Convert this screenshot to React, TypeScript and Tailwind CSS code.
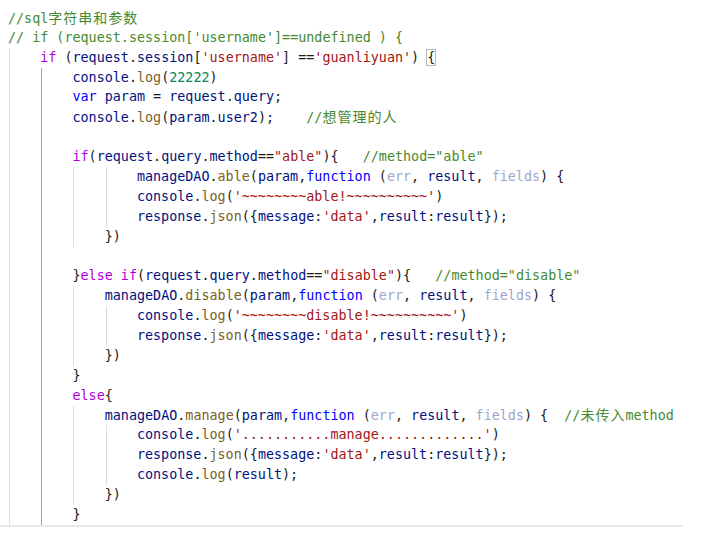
import React from "react";

type Tok = [string, string];

const K = "text-[#af00db]";
const B = "text-[#0000ff]";
const V = "text-[#001080]";
const F = "text-[#795e26]";
const S = "text-[#a31515]";
const C = "text-[#44892f]";
const N = "text-[#098658]";
const U = "text-[#a0a6cc]";
const P = "text-[#1a1a1a]";
const CJ = "cjk";
const BOX = "box";

type Line = { indent: number; guides: number[]; toks: Tok[] };

const G01 = [0, 1];
const G012 = [0, 1, 2];
const G0123 = [0, 1, 2, 3];

const lines: Line[] = [
  { indent: 0, guides: [], toks: [[C, "//sql"], [CJ, "字符串和参数"]] },
  { indent: 0, guides: [], toks: [[C, "// if (request.session['username']==undefined ) {"]] },
  {
    indent: 1,
    guides: [0],
    toks: [
      [K, "if"], [P, " ("], [V, "request"], [P, "."], [V, "session"], [P, "["],
      [S, "'username'"], [P, "] =="], [S, "'guanliyuan'"], [P, ") "], [BOX, "{"],
    ],
  },
  { indent: 2, guides: G01, toks: [[V, "console"], [P, "."], [F, "log"], [P, "("], [N, "22222"], [P, ")"]] },
  {
    indent: 2,
    guides: G01,
    toks: [[B, "var"], [P, " "], [V, "param"], [P, " = "], [V, "request"], [P, "."], [V, "query"], [P, ";"]],
  },
  {
    indent: 2,
    guides: G01,
    toks: [
      [V, "console"], [P, "."], [F, "log"], [P, "("], [V, "param"], [P, "."], [V, "user2"], [P, ");    "],
      [C, "//"], [CJ, "想管理的人"],
    ],
  },
  { indent: 0, guides: G01, toks: [] },
  {
    indent: 2,
    guides: G01,
    toks: [
      [K, "if"], [P, "("], [V, "request"], [P, "."], [V, "query"], [P, "."], [V, "method"], [P, "=="],
      [S, "\"able\""], [P, "){   "], [C, "//method=\"able\""],
    ],
  },
  {
    indent: 4,
    guides: G0123,
    toks: [
      [V, "manageDAO"], [P, "."], [F, "able"], [P, "("], [V, "param"], [P, ","], [B, "function"], [P, " ("],
      [U, "err"], [P, ", "], [V, "result"], [P, ", "], [U, "fields"], [P, ") {"],
    ],
  },
  { indent: 4, guides: G0123, toks: [[V, "console"], [P, "."], [F, "log"], [P, "("], [S, "'~~~~~~~~able!~~~~~~~~~~'"], [P, ")"]] },
  {
    indent: 4,
    guides: G0123,
    toks: [
      [V, "response"], [P, "."], [F, "json"], [P, "({"], [V, "message"], [P, ":"], [S, "'data'"], [P, ","],
      [V, "result"], [P, ":"], [V, "result"], [P, "});"],
    ],
  },
  { indent: 3, guides: G012, toks: [[P, "})"]] },
  { indent: 0, guides: G01, toks: [] },
  {
    indent: 2,
    guides: G01,
    toks: [
      [P, "}"], [K, "else"], [P, " "], [K, "if"], [P, "("], [V, "request"], [P, "."], [V, "query"], [P, "."],
      [V, "method"], [P, "=="], [S, "\"disable\""], [P, "){   "], [C, "//method=\"disable\""],
    ],
  },
  {
    indent: 3,
    guides: G012,
    toks: [
      [V, "manageDAO"], [P, "."], [F, "disable"], [P, "("], [V, "param"], [P, ","], [B, "function"], [P, " ("],
      [U, "err"], [P, ", "], [V, "result"], [P, ", "], [U, "fields"], [P, ") {"],
    ],
  },
  { indent: 4, guides: G0123, toks: [[V, "console"], [P, "."], [F, "log"], [P, "("], [S, "'~~~~~~~~disable!~~~~~~~~~~'"], [P, ")"]] },
  {
    indent: 4,
    guides: G0123,
    toks: [
      [V, "response"], [P, "."], [F, "json"], [P, "({"], [V, "message"], [P, ":"], [S, "'data'"], [P, ","],
      [V, "result"], [P, ":"], [V, "result"], [P, "});"],
    ],
  },
  { indent: 3, guides: G012, toks: [[P, "})"]] },
  { indent: 2, guides: G01, toks: [[P, "}"]] },
  { indent: 2, guides: G01, toks: [[K, "else"], [P, "{"]] },
  {
    indent: 3,
    guides: G012,
    toks: [
      [V, "manageDAO"], [P, "."], [F, "manage"], [P, "("], [V, "param"], [P, ","], [B, "function"], [P, " ("],
      [U, "err"], [P, ", "], [V, "result"], [P, ", "], [U, "fields"], [P, ") {  "], [C, "//"], [CJ, "未传入"],
      [C, "method"],
    ],
  },
  { indent: 4, guides: G0123, toks: [[V, "console"], [P, "."], [F, "log"], [P, "("], [S, "'...........manage.............'"], [P, ")"]] },
  {
    indent: 4,
    guides: G0123,
    toks: [
      [V, "response"], [P, "."], [F, "json"], [P, "({"], [V, "message"], [P, ":"], [S, "'data'"], [P, ","],
      [V, "result"], [P, ":"], [V, "result"], [P, "});"],
    ],
  },
  { indent: 4, guides: G0123, toks: [[V, "console"], [P, "."], [F, "log"], [P, "("], [V, "result"], [P, ");"]] },
  { indent: 3, guides: G012, toks: [[P, "})"]] },
  { indent: 2, guides: G01, toks: [[P, "}"]] },
];

function Token({ t }: { t: Tok }) {
  const [cls, text] = t;
  if (cls === CJ) {
    return <span className="font-['Noto_Sans_CJK_SC',sans-serif] text-[14px] tracking-[1px] text-[#44892f]">{text}</span>;
  }
  if (cls === BOX) {
    return <span className="text-[#1a1a1a] outline outline-1 outline-[#b8b8b8]">{text}</span>;
  }
  return <span className={cls}>{text}</span>;
}

function CodeLine({ line }: { line: Line }) {
  const cells = Math.max(line.indent, line.guides.length ? Math.max(...line.guides) + 1 : 0);
  return (
    <div className="flex h-[19.88px] items-center whitespace-pre">
      {Array.from({ length: cells }).map((_, i) => {
        const g = line.guides.includes(i);
        const active = i === 1;
        return (
          <span
            key={i}
            className={
              g
                ? active
                  ? "relative h-full w-[4ch] shrink-0 before:absolute before:inset-y-0 before:left-[1px] before:w-px before:bg-[#a3a3a3] before:content-['']"
                  : "relative h-full w-[4ch] shrink-0 before:absolute before:inset-y-0 before:left-[1px] before:w-px before:bg-[#dcdcdc] before:content-['']"
                : "h-full w-[4ch] shrink-0"
            }
          />
        );
      })}
      <span>
        {line.toks.map((t, i) => (
          <Token key={i} t={t} />
        ))}
      </span>
    </div>
  );
}

export default function App() {
  return (
    <div className="h-[546px] w-[702px] bg-white">
      <div className="w-[683px] border-b-2 border-[#e9e9e9] pl-[8px] pt-[8px] font-['DejaVu_Sans_Mono',monospace] text-[13.4px] text-[#1a1a1a]">
        {lines.map((l, i) => (
          <CodeLine key={i} line={l} />
        ))}
      </div>
    </div>
  );
}
